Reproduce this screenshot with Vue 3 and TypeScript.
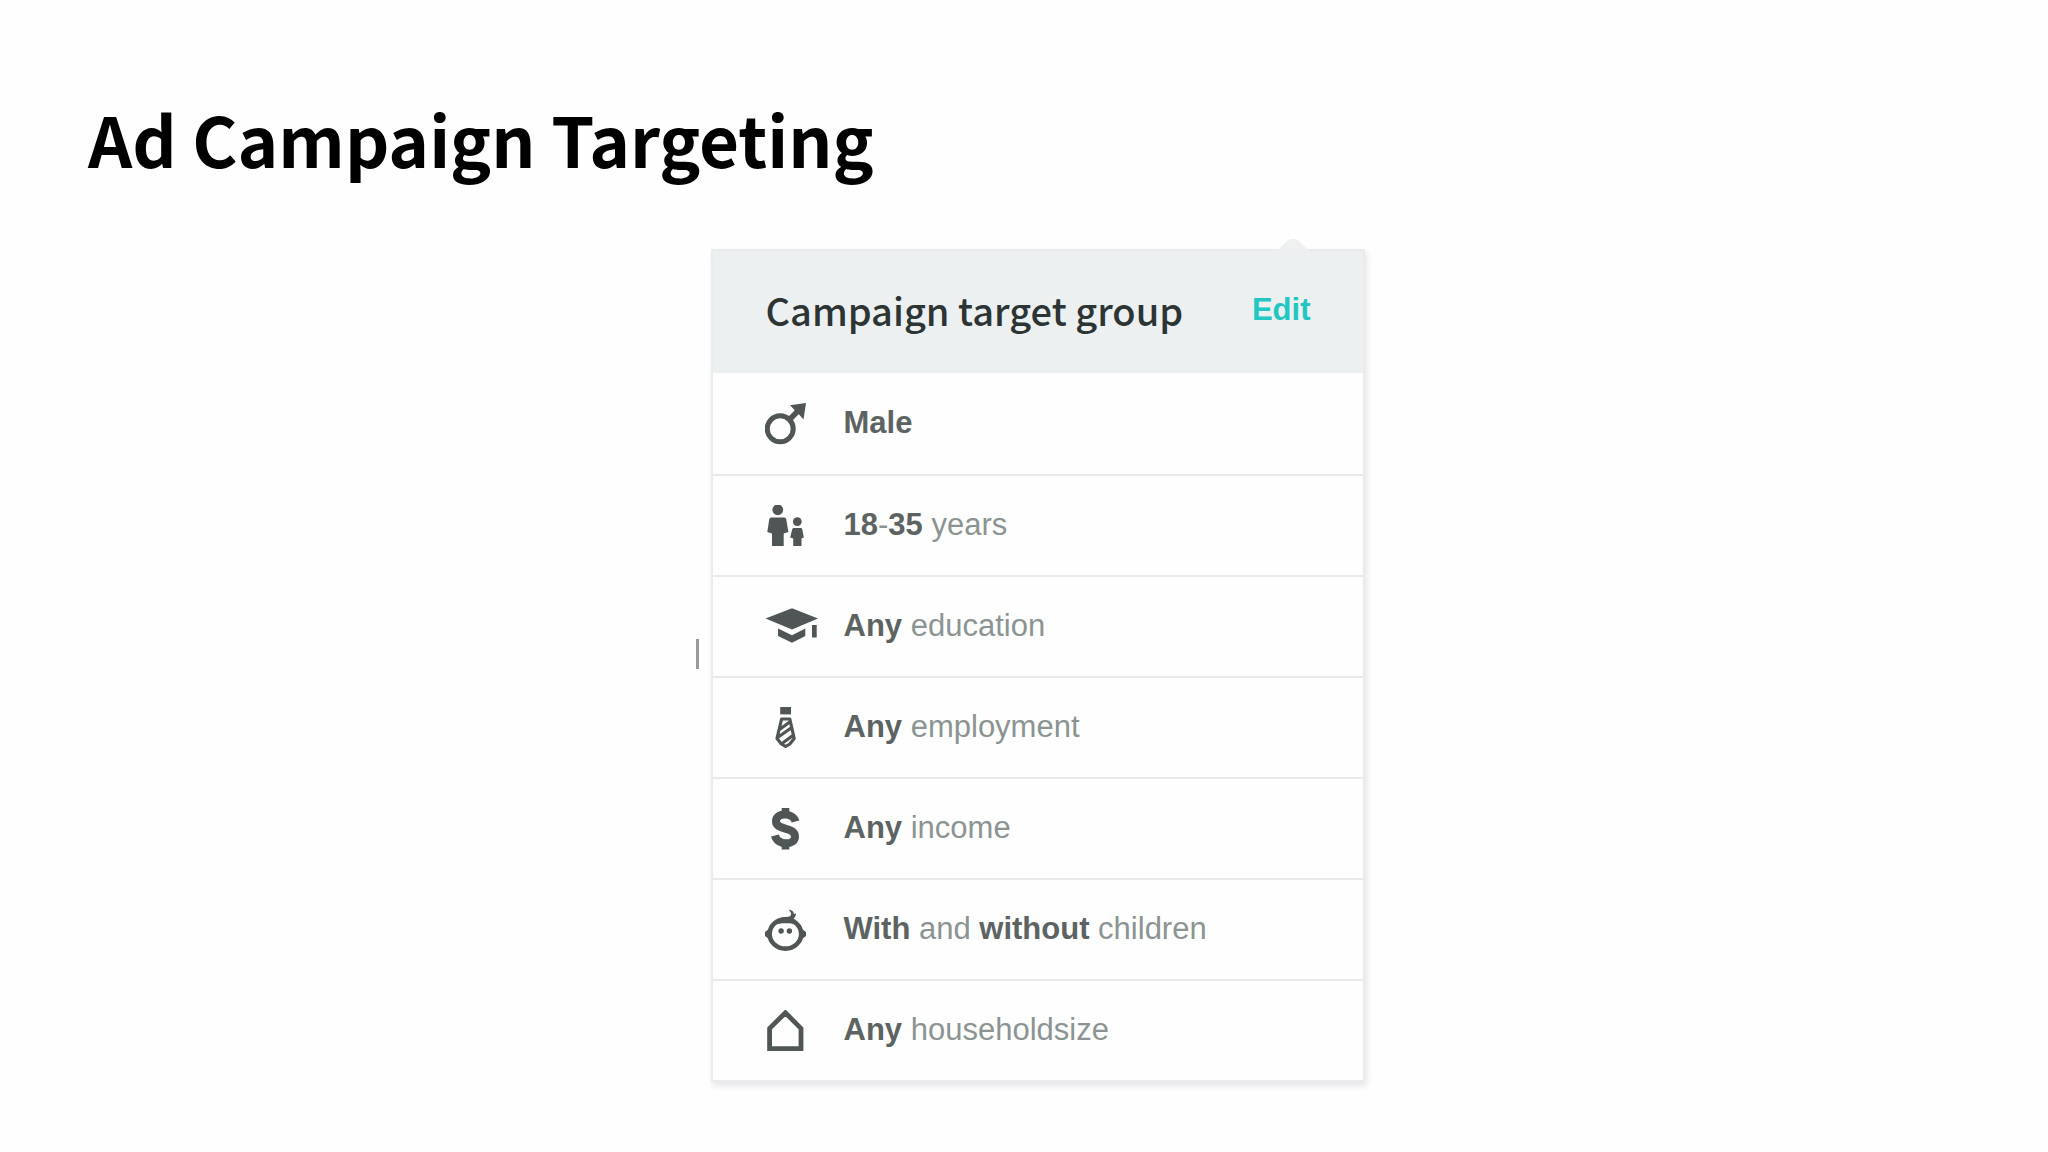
<script setup lang="ts">
interface Part {
  text: string
  strong?: boolean
}

interface Criterion {
  icon: string
  parts: Part[]
}

const criteria: Criterion[] = [
  { icon: 'male', parts: [{ text: 'Male', strong: true }] },
  {
    icon: 'age',
    parts: [
      { text: '18', strong: true },
      { text: '-' },
      { text: '35', strong: true },
      { text: ' years' },
    ],
  },
  { icon: 'education', parts: [{ text: 'Any', strong: true }, { text: ' education' }] },
  { icon: 'employment', parts: [{ text: 'Any', strong: true }, { text: ' employment' }] },
  { icon: 'income', parts: [{ text: 'Any', strong: true }, { text: ' income' }] },
  {
    icon: 'children',
    parts: [
      { text: 'With', strong: true },
      { text: ' and ' },
      { text: 'without', strong: true },
      { text: ' children' },
    ],
  },
  { icon: 'household', parts: [{ text: 'Any', strong: true }, { text: ' householdsize' }] },
]
</script>

<template>
  <main class="slide">
    <h1 class="title">Ad Campaign Targeting</h1>

    <div class="stage">
      <span class="caret" aria-hidden="true"></span>

      <section class="card" aria-labelledby="card-title">
        <svg class="pointer" viewBox="0 0 32 12" aria-hidden="true">
          <path d="M0 12 L10 2 Q12 0 14 0 H18 Q20 0 22 2 L32 12 Z" fill="#eff1f1" />
        </svg>
        <header class="card-header">
          <h2 id="card-title" class="card-title">Campaign target group</h2>
          <button type="button" class="edit">Edit</button>
        </header>

        <ul class="list">
          <li v-for="item in criteria" :key="item.icon" class="row">
            <svg class="icon" viewBox="0 0 54 42" aria-hidden="true">
              <g v-if="item.icon === 'male'">
                <circle cx="15.2" cy="25.8" r="13" fill="none" stroke="currentColor" stroke-width="5" />
                <path d="M24 17 L34 7" stroke="currentColor" stroke-width="5.4" />
                <path d="M41 0 L25 2.2 L29.5 7 L34.5 12 L38.5 16.5 Z" fill="currentColor" />
              </g>
              <g v-else-if="item.icon === 'age'" fill="currentColor">
                <circle cx="12.8" cy="4.8" r="5.4" />
                <path d="M5.5 12.5 H20 L21.2 14 L23.4 27 L18.7 28.5 V41 H7 V28.5 L2.3 27 L4.3 14 Z" />
                <circle cx="32.3" cy="16.6" r="4.4" />
                <path d="M28.3 23 H36.3 L37.2 24 L38.8 32.5 L36.5 33.5 V41 H28.2 V33.5 L25.2 32.5 L27.3 24 Z" />
              </g>
              <g v-else-if="item.icon === 'education'" fill="currentColor">
                <path d="M0.5 12.4 L27 2.2 L53 12.4 L27 23.4 Z" />
                <path d="M13 22.6 L27 29.2 L40.3 22.6 V30 L27 36.8 L13 30 Z" />
                <path d="M47 19 H51.7 V31.5 H47 Z" />
              </g>
              <g v-else-if="item.icon === 'employment'">
                <path d="M15.2 0 H26 V7.4 H15.2 Z" fill="currentColor" />
                <path
                  d="M16.6 12 H24.8 L29.2 31.5 L24.8 37 L20.6 39.5 L16.4 37 L12 31.5 Z M14.5 22.5 L25.5 14.5 M12.6 30.5 L27.5 20 M17 36.5 L28.5 28"
                  fill="none"
                  stroke="currentColor"
                  stroke-width="3.2"
                  stroke-linejoin="round"
                />
              </g>
              <g v-else-if="item.icon === 'income'" fill="none" stroke="currentColor">
                <path
                  d="M30.5 13.5 C28 4.5 11 4 11 13.2 C11 23 30 18 30 28.8 C30 37.5 12.5 38 10 27.5"
                  stroke-width="8"
                />
                <path d="M20.5 0 V6 M20.5 35 V41.5" stroke-width="7.6" />
              </g>
              <g v-else-if="item.icon === 'children'">
                <ellipse cx="20.4" cy="25" rx="15.8" ry="14.6" fill="none" stroke="currentColor" stroke-width="4.6" />
                <path d="M4.5 19.5 L0 23 V27 L4.5 30.5 Z M36.3 19.5 L41 23 V27 L36.3 30.5 Z" fill="currentColor" />
                <path
                  d="M8 16 C12 8.5 20 8 24.5 7.5 C27.5 6 26 2.5 23.2 0.5 C27 1 29 2.5 28.8 5 L31 4.5 C31 7 29.5 9 28.5 10 C31 11 33.5 14 34 16 C27 13.5 15 13.5 8 16 Z"
                  fill="currentColor"
                />
                <circle cx="16.1" cy="22" r="2.7" fill="currentColor" />
                <circle cx="24.4" cy="22" r="2.7" fill="currentColor" />
              </g>
              <path
                v-else
                d="M20.4 2.8 L36 18.4 V38.6 H4.6 V18.4 Z"
                fill="none"
                stroke="currentColor"
                stroke-width="4.8"
              />
            </svg>
            <p class="label">
              <template v-for="(part, i) in item.parts" :key="i"
                ><strong v-if="part.strong">{{ part.text }}</strong
                ><template v-else>{{ part.text }}</template></template
              >
            </p>
          </li>
        </ul>
      </section>
    </div>
  </main>
</template>

<style>
body {
  margin: 0;
  background: #fefefe;
}
</style>

<style scoped>
.slide {
  padding: 86px 88px 64px;
}

.title {
  margin: 0;
  font: 700 69px/104px 'Noto Sans CJK SC', 'Noto Sans', sans-serif;
  color: #000;
}

.stage {
  display: flex;
  align-items: center;
  justify-content: center;
  gap: 12px;
  margin-top: 59px;
  padding-left: 12px;
}

.caret {
  width: 3px;
  height: 30px;
  margin-bottom: 24px;
  background: #999;
}

.card {
  position: relative;
  box-sizing: border-box;
  width: 654px;
  border: 2px solid #e9ebec;
  background: #fefefe;
  box-shadow: 2px 4px 6px rgba(60, 50, 70, 0.12);
}

.pointer {
  position: absolute;
  right: 54px;
  bottom: 100%;
  width: 32px;
  height: 12px;
}

.card-header {
  display: flex;
  align-items: center;
  justify-content: space-between;
  height: 122px;
  padding: 0 52px 4px 53px;
  box-sizing: border-box;
  background: #edf0f1;
}

.card-title {
  margin: 0;
  font: 500 38px/56px 'Noto Sans CJK SC', 'Noto Sans', sans-serif;
  color: #2c3434;
}

.edit {
  padding: 0;
  border: 0;
  background: none;
  font: 700 31px/40px 'Liberation Sans', Arial, sans-serif;
  color: #22c7c3;
  cursor: pointer;
}

.list {
  margin: 0;
  padding: 0;
  list-style: none;
}

.row {
  display: flex;
  align-items: center;
  gap: 25px;
  box-sizing: border-box;
  height: 101px;
  padding-left: 52px;
}

.row + .row {
  border-top: 2px solid #e9eaec;
}

.icon {
  flex: none;
  width: 54px;
  height: 42px;
  color: #4f5655;
}

.label {
  margin: 0;
  padding-bottom: 2px;
  font: 400 31px/40px 'Liberation Sans', Arial, sans-serif;
  color: #8b9493;
  white-space: nowrap;
}

.label strong {
  font-weight: 700;
  color: #5c6362;
}
</style>
